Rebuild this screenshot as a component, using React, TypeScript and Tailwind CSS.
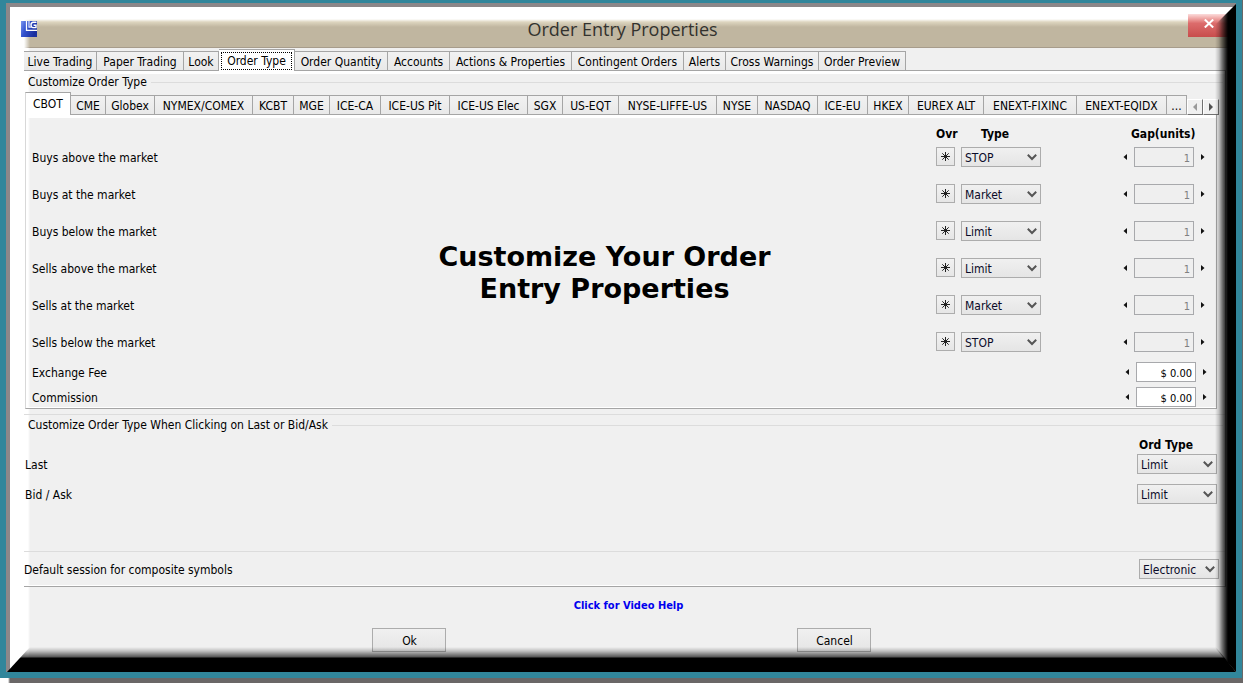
import React from "react";
import clsx from "clsx";

type Tab = { label: string; width: string };

const mainTabs: Tab[] = [
  { label: "Live Trading", width: "w-[73px]" },
  { label: "Paper Trading", width: "w-[87px]" },
  { label: "Look", width: "w-[35px]" },
  { label: "Order Type", width: "w-[76px]" },
  { label: "Order Quantity", width: "w-[93px]" },
  { label: "Accounts", width: "w-[62px]" },
  { label: "Actions & Properties", width: "w-[122px]" },
  { label: "Contingent Orders", width: "w-[112px]" },
  { label: "Alerts", width: "w-[42px]" },
  { label: "Cross Warnings", width: "w-[93px]" },
  { label: "Order Preview", width: "w-[87px]" },
];

const exchangeTabs: Tab[] = [
  { label: "CBOT", width: "w-[46px]" },
  { label: "CME", width: "w-[35px]" },
  { label: "Globex", width: "w-[49px]" },
  { label: "NYMEX/COMEX", width: "w-[98px]" },
  { label: "KCBT", width: "w-[41px]" },
  { label: "MGE", width: "w-[36px]" },
  { label: "ICE-CA", width: "w-[51px]" },
  { label: "ICE-US Pit", width: "w-[69px]" },
  { label: "ICE-US Elec", width: "w-[78px]" },
  { label: "SGX", width: "w-[35px]" },
  { label: "US-EQT", width: "w-[56px]" },
  { label: "NYSE-LIFFE-US", width: "w-[98px]" },
  { label: "NYSE", width: "w-[41px]" },
  { label: "NASDAQ", width: "w-[60px]" },
  { label: "ICE-EU", width: "w-[50px]" },
  { label: "HKEX", width: "w-[41px]" },
  { label: "EUREX ALT", width: "w-[75px]" },
  { label: "ENEXT-FIXINC", width: "w-[93px]" },
  { label: "ENEXT-EQIDX", width: "w-[90px]" },
  { label: "...", width: "w-[20px]" },
];

const rules = [
  { id: "buys-above", label: "Buys above the market", type: "STOP" },
  { id: "buys-at", label: "Buys at the market", type: "Market" },
  { id: "buys-below", label: "Buys below the market", type: "Limit" },
  { id: "sells-above", label: "Sells above the market", type: "Limit" },
  { id: "sells-at", label: "Sells at the market", type: "Market" },
  { id: "sells-below", label: "Sells below the market", type: "STOP" },
];

const fees = [
  { id: "exchange-fee", label: "Exchange Fee" },
  { id: "commission", label: "Commission" },
];

function TabButton({ tab, selected, focused, first }: { tab: Tab; selected: boolean; focused?: boolean; first?: boolean }) {
  return (
    <button
      type="button"
      role="tab"
      aria-selected={selected}
      className={clsx(
        "flex shrink-0 items-center justify-center whitespace-nowrap border-t border-r border-[#a5a5a5]",
        tab.width,
        first && "border-l border-l-[#d8d8d8]",
        selected ? "h-full bg-white" : "h-5 border-b bg-linear-to-b from-[#f2f2f2] to-[#e9e9e9] pt-px",
      )}
    >
      {focused ? (
        <span className="flex h-[18px] w-[71px] items-center justify-center border border-dotted border-black">{tab.label}</span>
      ) : (
        tab.label
      )}
    </button>
  );
}

function Dropdown({ id, value, options, label }: { id: string; value: string; options: string[]; label?: string }) {
  return (
    <span className="relative block h-5 w-20 shrink-0">
      <select
        id={id}
        aria-label={label}
        defaultValue={value}
        className="block h-5 w-full appearance-none border border-[#acacac] bg-linear-to-b from-[#f0f0f0] to-[#e5e5e5] pt-px pl-[3px] text-[12px] leading-4 text-[#0a0a28] outline-none"
      >
        {options.map((o) => (
          <option key={o}>{o}</option>
        ))}
      </select>
      <svg viewBox="0 0 10 7" className="pointer-events-none absolute top-[7px] right-[4px] h-[7px] w-[10px]" fill="none" stroke="#555" strokeWidth="2">
        <path d="M0.8 0.8 L5 5 L9.2 0.8" />
      </svg>
    </span>
  );
}

function Spinner({ id, value, disabled, label }: { id: string; value: string; disabled?: boolean; label?: string }) {
  return (
    <span className="flex shrink-0 items-center gap-[6px]">
      <button type="button" aria-label="Decrease" className="flex h-4 w-[6px] items-center justify-center">
        <svg viewBox="0 0 4 6" className="h-[6px] w-1">
          <path d="M4 0 L0.5 3 L4 6 Z" fill="#111" />
        </svg>
      </button>
      <input
        id={id}
        aria-label={label}
        defaultValue={value}
        disabled={disabled}
        className={clsx(
          "h-5 w-[60px] border border-[#a8a9ac] pt-[2px] pr-[3px] text-right text-[11px] outline-none",
          disabled ? "bg-[#efefef] text-[#808080]" : "bg-white text-black",
        )}
      />
      <button type="button" aria-label="Increase" className="flex h-4 w-[6px] items-center justify-center">
        <svg viewBox="0 0 4 6" className="h-[6px] w-1">
          <path d="M0 0 L3.5 3 L0 6 Z" fill="#111" />
        </svg>
      </button>
    </span>
  );
}

function GroupTitle({ children }: { children: React.ReactNode }) {
  return (
    <div className="flex h-4 items-center gap-1 pr-[2px] pl-1">
      <h2 className="whitespace-nowrap">{children}</h2>
      <span className="h-px flex-1 bg-[#dcdcdc]" />
    </div>
  );
}

function OverrideButton() {
  return (
    <button type="button" aria-label="Override" className="flex size-[19px] items-center justify-center border border-[#adadad] bg-linear-to-b from-[#f2f2f2] to-[#e6e6e6]">
      <svg viewBox="0 0 11 11" className="size-[11px]" stroke="#222" strokeWidth="1" fill="none">
        <path d="M5.5 1 V10 M1 5.5 H10 M2.3 2.3 L8.7 8.7 M8.7 2.3 L2.3 8.7" />
      </svg>
    </button>
  );
}

function Logo() {
  return (
    <svg viewBox="0 0 16 16" className="size-4 shrink-0">
      <defs>
        <linearGradient id="logo" x1="0" y1="0" x2="1" y2="0.4">
          <stop offset="0" stopColor="#7d97f0" />
          <stop offset="0.4" stopColor="#3554cf" />
          <stop offset="1" stopColor="#1a2f9e" />
        </linearGradient>
      </defs>
      <rect width="16" height="16" fill="url(#logo)" />
      <path d="M5.5 0 V9.3 H16" fill="none" stroke="#fff" strokeWidth="1.3" />
      <path d="M8 0 V6.2 H10" fill="none" stroke="#dfe6ff" strokeWidth="1.2" />
      <path d="M15.5 1.2 H12 Q9.8 1.6 10 4 Q10.2 6.6 12 6.6 H15 V4.2 H12.6" fill="none" stroke="#fff" strokeWidth="1.4" />
    </svg>
  );
}

const orderTypes = ["STOP", "Market", "Limit"];

export default function App() {
  return (
    <div className="flex min-h-screen flex-col bg-[linear-gradient(to_right,white_8px,#6a6767_10px)] pr-px pb-[5px] font-['DejaVu_Sans_Condensed','Noto_Sans',sans-serif] text-[12px] leading-4 text-black">
      <div className="flex flex-1 flex-col bg-[#31869b] px-[6px] pt-[3px] pb-[6px]">
        <div className="relative flex flex-1 flex-col border-t-4 border-l-4 border-[#8c8789] bg-[linear-gradient(to_right,white_18px,#f0f0f0_20px)]">
          <header className="flex h-[41px] items-start bg-[linear-gradient(to_right,white_14px,transparent_20px),linear-gradient(to_bottom,white_12px,#ddd5bf_15px,#c0b6a0_20px,#c0b6a0_40px,#a79c8b_40px)] pl-[11px]">
            <span className="mt-[14px]">
              <Logo />
            </span>
            <h1 className="mt-[10px] flex-1 pl-5 text-center font-['Open_Sans','Noto_Sans',sans-serif] text-[18px] leading-6 text-[#33322e]">
              Order Entry Properties
            </h1>
            <button type="button" aria-label="Close" className="mt-[7px] flex h-[23px] w-12 items-start justify-center bg-linear-to-b from-[#fbdcdc] via-[#dc6c6c] via-40% to-[#c84c4c] pt-[5px] pr-[7px]">
              <svg viewBox="0 0 10 9" className="h-[9px] w-[10px]" stroke="#fff" strokeWidth="2" fill="none">
                <path d="M0.8 0.5 L9.2 8.5 M9.2 0.5 L0.8 8.5" />
              </svg>
            </button>
          </header>

          <main className="pt-px pr-[10px] pl-[14px]">
            <div role="tablist" aria-label="Settings" className="flex h-[22px] items-end">
              {mainTabs.map((t) => (
                <TabButton key={t.label} tab={t} selected={t.label === "Order Type"} focused={t.label === "Order Type"} />
              ))}
              <span className="h-px flex-1 bg-[#a5a5a5]" />
            </div>

            <div className="border-r border-b border-r-[#8f8f8f] border-b-[#a5a5a5]">
              <div className="border-t-[3px] border-b border-white">
                <section className="border-b border-b-[#dcdcdc] pb-[5px]">
                  <GroupTitle>Customize Order Type</GroupTitle>
                  <div className="pt-[2px] pr-[6px] pl-px">
                    <div className="flex h-[23px] items-end">
                      <div role="tablist" aria-label="Exchanges" className="flex h-full min-w-0 flex-1 items-end overflow-hidden">
                        {exchangeTabs.map((t, i) => (
                          <TabButton key={t.label} tab={t} selected={i === 0} first={i === 0} />
                        ))}
                      </div>
                      <button type="button" aria-label="Scroll tabs left" className="flex size-4 shrink-0 items-center justify-center border border-t-white border-r-[#707070] border-b-[#707070] border-l-white bg-[#f0f0f0]">
                        <svg viewBox="0 0 4 8" className="h-2 w-1">
                          <path d="M4 0 V8 L0 4 Z" fill="#9a9a9a" />
                        </svg>
                      </button>
                      <button type="button" aria-label="Scroll tabs right" className="flex size-4 shrink-0 items-center justify-center border border-t-white border-r-[#707070] border-b-[#707070] border-l-white bg-[#f0f0f0]">
                        <svg viewBox="0 0 4 8" className="h-2 w-1">
                          <path d="M0 0 V8 L4 4 Z" fill="#505050" />
                        </svg>
                      </button>
                    </div>

                    <div className="relative mr-[2px] border-r border-b border-l border-r-[#a5a5a5] border-b-[#a5a5a5] border-l-[#d8d8d8]">
                      <div className="border-t-[3px] border-b border-white pl-[6px]">
                        <div className="mb-1 flex h-[25px] items-center pt-[6px] pr-[19px] font-bold">
                          <span className="flex-1" />
                          <span className="w-[25px]">Ovr</span>
                          <span className="w-20 pl-5">Type</span>
                          <span className="w-[90px]" />
                          <span className="w-[66px] whitespace-nowrap">Gap(units)</span>
                        </div>
                        <div className="flex flex-col gap-[17px]">
                          {rules.map((r) => (
                            <div key={r.id} className="flex h-5 items-center pr-[10px]">
                              <label htmlFor={r.id} className="flex-1 pt-px">
                                {r.label}
                              </label>
                              <span className="mr-[6px] h-5">
                                <OverrideButton />
                              </span>
                              <Dropdown id={r.id} value={r.type} options={orderTypes} />
                              <span className="w-[81px]" />
                              <Spinner id={r.id + "-gap"} value="1" disabled label={r.label + " gap"} />
                            </div>
                          ))}
                        </div>
                        <div className="mt-[10px] flex flex-col gap-[5px]">
                          {fees.map((f) => (
                            <div key={f.id} className="flex h-5 items-center pr-2">
                              <label htmlFor={f.id} className="flex-1 pt-px">
                                {f.label}
                              </label>
                              <Spinner id={f.id} value="$ 0.00" />
                            </div>
                          ))}
                        </div>
                      </div>
                      <p className="pointer-events-none absolute inset-x-0 top-[126px] pr-[33px] text-center font-['DejaVu_Sans',sans-serif] text-[27px] leading-8 font-bold">
                        Customize Your Order
                        <br />
                        Entry Properties
                      </p>
                    </div>
                  </div>
                </section>

                <section className="border-b border-b-[#dcdcdc] pt-[2px] pb-[47px]">
                  <GroupTitle>Customize Order Type When Clicking on Last or Bid/Ask</GroupTitle>
                  <div className="pt-[3px] pr-2 pl-px">
                    <div className="flex h-[18px] items-center justify-end font-bold">
                      <span className="w-[78px] whitespace-nowrap">Ord Type</span>
                    </div>
                    <div className="flex h-5 items-center">
                      <label htmlFor="last" className="flex-1 pt-px">
                        Last
                      </label>
                      <Dropdown id="last" value="Limit" options={orderTypes} />
                    </div>
                    <div className="mt-[10px] flex h-5 items-center">
                      <label htmlFor="bid-ask" className="flex-1 pt-px">
                        Bid / Ask
                      </label>
                      <Dropdown id="bid-ask" value="Limit" options={orderTypes} />
                    </div>
                  </div>
                </section>

                <div className="mt-[7px] mb-[6px] flex h-5 items-center pr-[6px]">
                  <label htmlFor="session" className="flex-1 pt-px">
                    Default session for composite symbols
                  </label>
                  <Dropdown id="session" value="Electronic" options={["Electronic", "Pit"]} />
                </div>
              </div>
            </div>
          </main>

          <footer className="flex flex-col items-center pt-[11px] pb-5">
            <a href="#video-help" className="ml-[11px] text-[11px] leading-4 font-bold text-[#0000ee]">
              Click for Video Help
            </a>
            <div className="mt-[14px] flex gap-[351px] pr-[3px]">
              {["Ok", "Cancel"].map((b) => (
                <button key={b} type="button" className="h-6 w-[74px] border border-[#acacac] bg-linear-to-b from-[#f0f0f0] to-[#e5e5e5] pt-px pl-px">
                  {b}
                </button>
              ))}
            </div>
          </footer>

          <div className="pointer-events-none absolute -top-1 right-0 bottom-0 w-[21px] bg-[linear-gradient(to_right,transparent,rgba(0,0,0,0.2)_4px,rgba(0,0,0,0.5)_7px,rgba(0,0,0,0.85)_11px,black_13px)] [clip-path:polygon(100%_1px,100%_100%,0_calc(100%_-_24px),0_22px)]" />
          <div className="pointer-events-none absolute right-0 bottom-0 -left-1 h-[25px] bg-[linear-gradient(to_bottom,transparent,rgba(0,0,0,0.2)_4px,rgba(0,0,0,0.65)_10px,black_11px)] [clip-path:polygon(1px_100%,24px_0,calc(100%_-_20px)_0,100%_100%)]" />
        </div>
      </div>
    </div>
  );
}
